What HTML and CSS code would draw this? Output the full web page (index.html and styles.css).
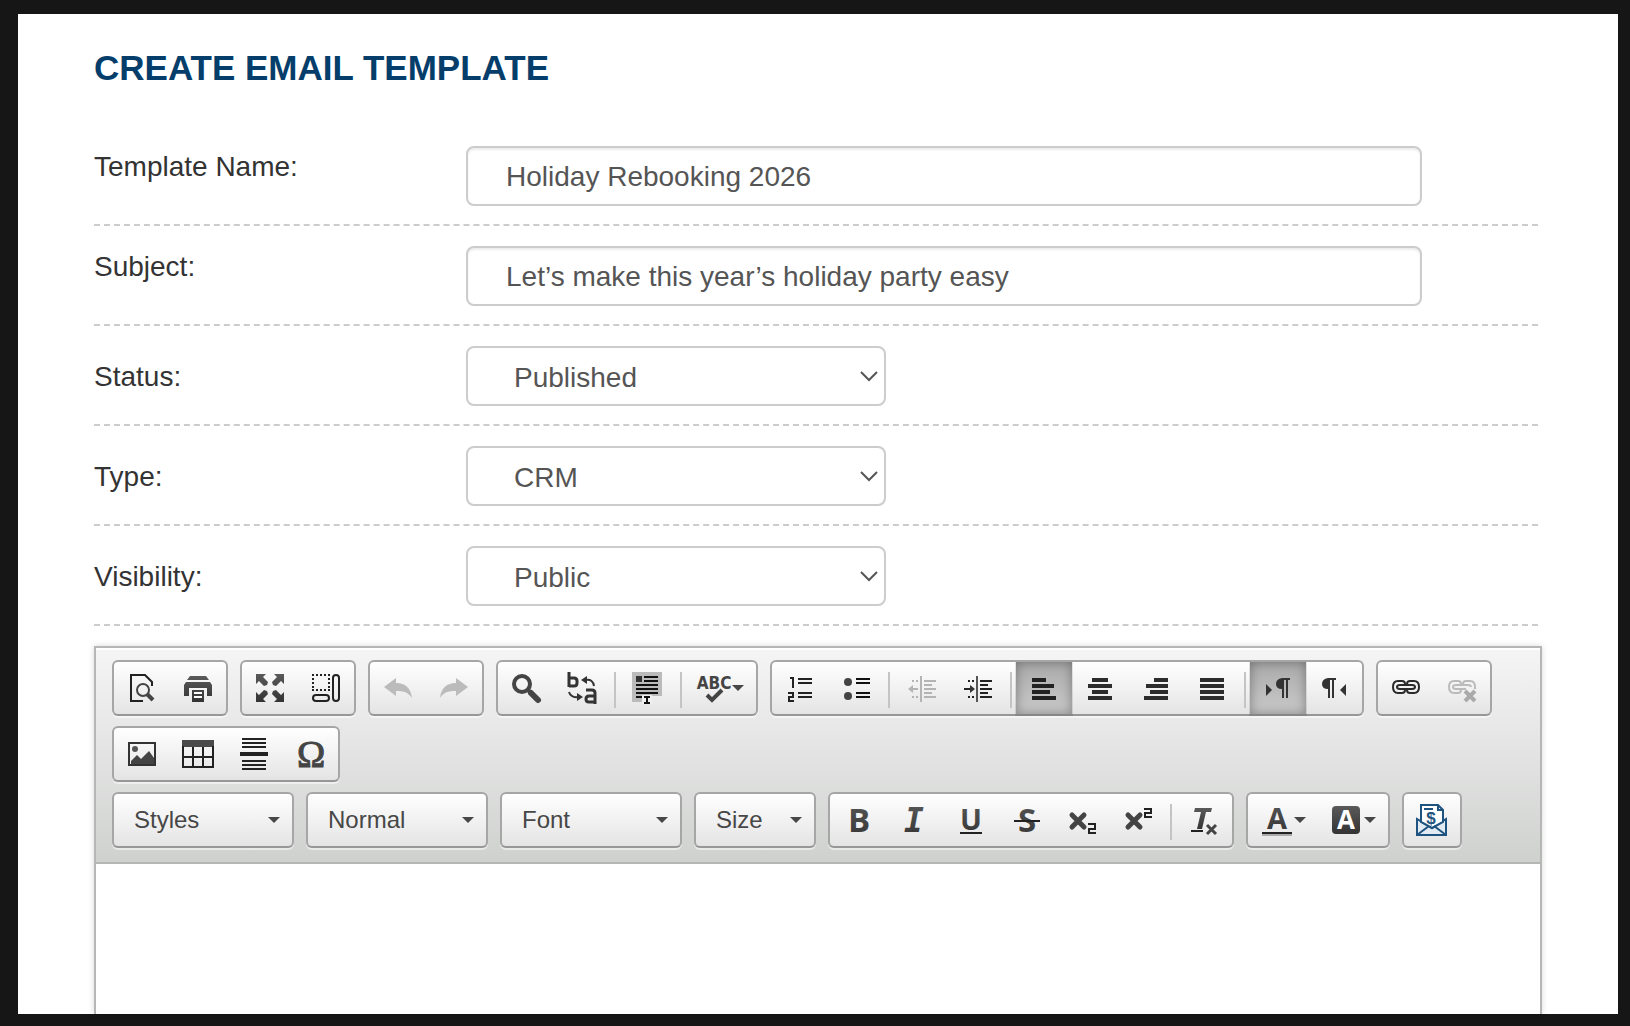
FILE: index.html
```html
<!DOCTYPE html>
<html lang="en">
<head>
<meta charset="utf-8">
<meta name="viewport" content="width=device-width, initial-scale=1">
<title>Create Email Template</title>
<link rel="stylesheet" href="styles.css">
</head>
<body>
<svg class="defs" aria-hidden="true">
  <defs>
    <linearGradient id="ink" x1="0" y1="0" x2="0" y2="1"><stop offset="0" stop-color="#5a5a5a"/><stop offset="1" stop-color="#333"/></linearGradient>
    <symbol id="arrow" viewBox="0 0 12 6"><path d="M0 0h12L6 6z" fill="#474747"/></symbol>
    <symbol id="chevron" viewBox="0 0 18 12"><path d="M1 2l8 8 8-8" fill="none" stroke="#555" stroke-width="2"/></symbol>
  </defs>
</svg>
<main class="panel">
  <h1 class="title">CREATE EMAIL TEMPLATE</h1>
  <form class="form">
    <div class="row">
      <label class="label" for="name">Template Name:</label>
      <input class="field" id="name" type="text" value="Holiday Rebooking 2026">
    </div>
    <div class="row">
      <label class="label" for="subject">Subject:</label>
      <input class="field" id="subject" type="text" value="Let’s make this year’s holiday party easy">
    </div>
    <div class="row row-select">
      <label class="label" for="status">Status:</label>
      <div class="picker"><select class="field" id="status"><option>Published</option></select><svg class="chevron"><use href="#chevron"/></svg></div>
    </div>
    <div class="row row-select">
      <label class="label" for="type">Type:</label>
      <div class="picker"><select class="field" id="type"><option>CRM</option></select><svg class="chevron"><use href="#chevron"/></svg></div>
    </div>
    <div class="row row-select">
      <label class="label" for="visibility">Visibility:</label>
      <div class="picker"><select class="field" id="visibility"><option>Public</option></select><svg class="chevron"><use href="#chevron"/></svg></div>
    </div>
  </form>

  <section class="editor" aria-label="Message editor">
    <div class="toolbar" role="toolbar" aria-label="Formatting">
      <div class="tools">
        <div class="group">
          <button class="tool" type="button" aria-label="Preview"><svg class="icon" viewBox="0 0 32 32"><path d="M17 29H5V3h14l7 7v4" fill="none" stroke="#222" stroke-width="2"/><circle cx="17" cy="18" r="6" fill="none" stroke="#444" stroke-width="2"/><path d="M21 22l6 6" stroke="#444" stroke-width="4"/></svg></button>
          <button class="tool" type="button" aria-label="Print"><svg class="icon" viewBox="0 0 32 32"><path d="M8 4h16l3 4H5zM4 10h24l2 3v11h-5v-8H7v8H2V13zM10 18h12v12H10z" fill="url(#ink)"/><path d="M8 17h16" stroke="#f6f6f6" stroke-width="2"/><path d="M12 21h8M12 25h8" stroke="#fff" stroke-width="2"/></svg></button>
        </div>
        <div class="group">
          <button class="tool" type="button" aria-label="Maximize"><svg class="icon" viewBox="0 0 32 32"><path d="M2 2h10L9 5l5 5-1 3-3 1-5-5-3 3zM30 2H20l3 3-5 5 1 3 3 1 5-5 3 3zM2 30h10l-3-3 5-5-1-3-3-1-5 5-3-3zM30 30H20l3-3-5-5 1-3 3-1 5 5 3-3z" fill="url(#ink)"/></svg></button>
          <button class="tool" type="button" aria-label="Show blocks"><svg class="icon" viewBox="0 0 32 32" fill="none" stroke="#222" stroke-width="2"><path d="M2 3h18M2 18h18M3 6v11M19 6v11" stroke-dasharray="2 2"/><rect x="3" y="23" width="16" height="6" rx="3"/><rect x="23" y="3" width="6" height="26" rx="3"/></svg></button>
        </div>
        <div class="group">
          <button class="tool" type="button" aria-label="Undo" disabled><svg class="icon" viewBox="0 0 32 32"><path d="M2 15l12-9v5c9 0 15 5 16 15-4-6-8-7-16-7v5z" fill="#bbb"/></svg></button>
          <button class="tool" type="button" aria-label="Redo" disabled><svg class="icon" viewBox="0 0 32 32"><path d="M30 15L18 6v5C9 11 3 16 2 26c4-6 8-7 16-7v5z" fill="#bbb"/></svg></button>
        </div>
        <div class="group">
          <button class="tool" type="button" aria-label="Find"><svg class="icon" viewBox="0 0 32 32" fill="none" stroke="#444"><circle cx="12" cy="12" r="8" stroke-width="4"/><path d="M18 18l3 3" stroke-width="4"/><path d="M21 21l7 7" stroke-width="6" stroke-linecap="round"/></svg></button>
          <button class="tool" type="button" aria-label="Replace"><svg class="icon" viewBox="0 0 32 32" fill="none" stroke="#333"><path d="M3 0v15M3 6h5q3 0 3 3v2q0 3-3 3H3" stroke-width="3"/><path d="M20 18h6q3 0 3 3v11M29 24h-6q-3 0-3 3t3 3h6" stroke-width="3"/><path d="M20 8q7-1 8 6M3 20q2 6 9 5" stroke-width="2"/><path d="M15 8l6-4v8zM17 25l-6-4v8z" fill="#333" stroke="none"/></svg></button>
          <span class="sep"></span>
          <button class="tool" type="button" aria-label="Select all"><svg class="icon" viewBox="0 0 32 32"><path d="M0 0h30v24H20v6H0z" fill="#bbb"/><path d="M4 4h6v6H4z" fill="#333"/><path d="M12 5h14M12 9h14M4 13h22M4 17h22M4 21h22M4 25h6" stroke="#111" stroke-width="2"/><path d="M10 23h10v9H10z" fill="#f0f0f0"/><path d="M12 25h6M12 31h6M15 25v6" stroke="#111" stroke-width="2"/></svg></button>
          <span class="sep"></span>
          <button class="tool tool-menu" type="button" aria-label="Spell check"><svg class="icon" viewBox="0 0 32 32"><text class="glyph-abc" x="16" y="17" text-anchor="middle">ABC</text><path d="M9 23l5 5L24 18" fill="none" stroke="#444" stroke-width="4"/></svg><svg class="arrow"><use href="#arrow"/></svg></button>
        </div>
        <div class="group">
          <button class="tool" type="button" aria-label="Numbered list"><svg class="icon" viewBox="0 0 32 32" fill="none" stroke="#222" stroke-width="2"><path d="M14 7h14M14 11h14M14 21h14M14 25h14"/><path d="M6 6h3v10M4 21h5v4H5v4h5"/></svg></button>
          <button class="tool" type="button" aria-label="Bulleted list"><svg class="icon" viewBox="0 0 32 32"><circle cx="8" cy="10" r="4" fill="#444"/><circle cx="8" cy="24" r="4" fill="#444"/><path d="M16 7h14M16 11h14M16 21h14M16 25h14" stroke="#111" stroke-width="2"/></svg></button>
          <span class="sep"></span>
          <button class="tool" type="button" aria-label="Decrease indent" disabled><svg class="icon" viewBox="0 0 32 32" stroke="#b4b4b4" stroke-width="2"><path d="M15 4v26M18 9h12M18 13h8M18 17h12M18 21h8M18 25h12M6 9h2M10 9h2M6 25h2M10 25h2M5 17h7"/><path d="M2 17l5-4v8z" fill="#b4b4b4" stroke="none"/></svg></button>
          <button class="tool" type="button" aria-label="Increase indent"><svg class="icon" viewBox="0 0 32 32" stroke="#222" stroke-width="2"><path d="M15 4v26" stroke="#555"/><path d="M18 9h12M18 13h8M18 17h12M18 21h8M18 25h12M6 9h2M10 9h2M6 25h2M10 25h2M2 17h7"/><path d="M13 17l-5-4v8z" fill="#333" stroke="none"/></svg></button>
          <span class="sep"></span>
          <button class="tool is-on" type="button" aria-label="Align left" aria-pressed="true"><svg class="icon" viewBox="0 0 32 32" stroke="#222" stroke-width="4"><path d="M4 8h14M4 14h22M4 20h18M4 26h24"/></svg></button>
          <button class="tool" type="button" aria-label="Center"><svg class="icon" viewBox="0 0 32 32" stroke="#2c2c2c" stroke-width="4"><path d="M8 8h16M4 14h24M8 20h16M4 26h24"/></svg></button>
          <button class="tool" type="button" aria-label="Align right"><svg class="icon" viewBox="0 0 32 32" stroke="#2c2c2c" stroke-width="4"><path d="M14 8h14M6 14h22M10 20h18M4 26h24"/></svg></button>
          <button class="tool" type="button" aria-label="Justify"><svg class="icon" viewBox="0 0 32 32" stroke="#2c2c2c" stroke-width="4"><path d="M4 8h24M4 14h24M4 20h24M4 26h24"/></svg></button>
          <span class="sep"></span>
          <button class="tool is-on" type="button" aria-label="Text direction left to right" aria-pressed="true"><svg class="icon" viewBox="0 0 32 32"><path d="M4 12l6 6-6 6z" fill="#333"/><path d="M28 6v2h-2v18h-2V8h-2v18h-2V17q-6 0-6-5t6-6z" fill="#333"/></svg></button>
          <button class="tool" type="button" aria-label="Text direction right to left"><svg class="icon" viewBox="0 0 32 32"><path d="M28 12l-6 6 6 6z" fill="#333"/><path d="M18 6v2h-2v18h-2V8h-2v18h-2V17q-6 0-6-5t6-6z" fill="#333"/></svg></button>
        </div>
        <div class="group">
          <button class="tool" type="button" aria-label="Link"><svg class="icon" viewBox="0 0 32 32" fill="none" stroke="#2a2a2a" stroke-width="2"><path d="M15 12q0-3-3-3H8q-5 0-5 6t5 6h4q3 0 3-3M17 12q0-3 3-3h4q5 0 5 6t-5 6h-4q-3 0-3-3"/><path d="M10 13q-3 0-3 2t3 2h12q3 0 3-2t-3-2z"/></svg></button>
          <button class="tool" type="button" aria-label="Unlink" disabled><svg class="icon" viewBox="0 0 32 32" fill="none" stroke="#bbb" stroke-width="2"><path d="M15 12q0-3-3-3H8q-5 0-5 6t5 6h4q3 0 3-3M17 12q0-3 3-3h4q5 0 5 6v2"/><path d="M20 17H10q-3 0-3-2t3-2h12q3 0 3 2"/><path d="M19 19l10 10M29 19L19 29" stroke="#aaa" stroke-width="4"/></svg></button>
        </div>
      </div>
      <div class="tools">
        <div class="group">
          <button class="tool" type="button" aria-label="Image"><svg class="icon" viewBox="0 0 32 32"><path d="M3 5h26v22H3z" fill="none" stroke="#333" stroke-width="2"/><circle cx="9" cy="11" r="3" fill="#555"/><path d="M5 26v-3l6-6 4 4 8-8 5 7v6z" fill="#444"/></svg></button>
          <button class="tool" type="button" aria-label="Table"><svg class="icon" viewBox="0 0 32 32"><path d="M0 2h32v7H0z" fill="#4a4a4a"/><path d="M1 8v21h30V8M1 19h30M11 9v20M21 9v20" fill="none" stroke="#222" stroke-width="2"/></svg></button>
          <button class="tool" type="button" aria-label="Horizontal line"><svg class="icon" viewBox="0 0 32 32" stroke="#222" stroke-width="2"><path d="M4 1h24M4 5h24M4 9h24M4 23h24M4 27h24M4 31h24"/><path d="M2 16h28" stroke-width="4"/></svg></button>
          <button class="tool" type="button" aria-label="Special character"><svg class="icon" viewBox="0 0 32 32"><text class="glyph-omega" x="17" y="29" text-anchor="middle">Ω</text></svg></button>
        </div>
      </div>
      <div class="tools">
        <div class="combo"><select class="combo-select" aria-label="Styles"><option>Styles</option></select><svg class="arrow"><use href="#arrow"/></svg></div>
        <div class="combo"><select class="combo-select" aria-label="Paragraph format"><option>Normal</option></select><svg class="arrow"><use href="#arrow"/></svg></div>
        <div class="combo"><select class="combo-select" aria-label="Font"><option>Font</option></select><svg class="arrow"><use href="#arrow"/></svg></div>
        <div class="combo combo-small"><select class="combo-select" aria-label="Size"><option>Size</option></select><svg class="arrow"><use href="#arrow"/></svg></div>
        <div class="group">
          <button class="tool" type="button" aria-label="Bold"><svg class="icon" viewBox="0 0 32 32"><text class="glyph" x="17" y="28" text-anchor="middle">B</text></svg></button>
          <button class="tool" type="button" aria-label="Italic"><svg class="icon" viewBox="0 0 32 32"><text class="glyph-italic" x="16" y="28" text-anchor="middle">I</text></svg></button>
          <button class="tool" type="button" aria-label="Underline"><svg class="icon" viewBox="0 0 32 32"><text class="glyph glyph-mid" x="17" y="26" text-anchor="middle">U</text><path d="M6 29h22" stroke="#222" stroke-width="2"/></svg></button>
          <button class="tool" type="button" aria-label="Strikethrough"><svg class="icon" viewBox="0 0 32 32"><text class="glyph" x="17" y="28" text-anchor="middle">S</text><path d="M4 17h26" stroke="#222" stroke-width="2"/></svg></button>
          <button class="tool" type="button" aria-label="Subscript"><svg class="icon" viewBox="0 0 32 32" fill="none"><path d="M6 11l12 12M18 11L6 23" stroke="#444" stroke-width="5" stroke-linecap="round"/><path d="M22 20h7v5h-6v4h7" stroke="#222" stroke-width="2"/></svg></button>
          <button class="tool" type="button" aria-label="Superscript"><svg class="icon" viewBox="0 0 32 32" fill="none"><path d="M6 11l12 12M18 11L6 23" stroke="#444" stroke-width="5" stroke-linecap="round"/><path d="M22 5h7v4h-6v4h7" stroke="#222" stroke-width="2"/></svg></button>
          <span class="sep"></span>
          <button class="tool" type="button" aria-label="Remove format"><svg class="icon" viewBox="0 0 32 32"><path d="M7 4h17l-1 4h-5l-4 17H9l4-17H6z" fill="url(#ink)"/><path d="M3 27h12" stroke="#222" stroke-width="2"/><path d="M19 21l9 9M28 21l-9 9" stroke="#444" stroke-width="3"/></svg></button>
        </div>
        <div class="group">
          <button class="tool tool-menu" type="button" aria-label="Text color"><svg class="icon" viewBox="0 0 32 32"><text class="glyph glyph-mid" x="17" y="25" text-anchor="middle">A</text><path d="M2 29h30" stroke="#222" stroke-width="2"/><path d="M2 31h30" stroke="#aaa" stroke-width="2"/></svg><svg class="arrow"><use href="#arrow"/></svg></button>
          <button class="tool tool-menu" type="button" aria-label="Background color"><svg class="icon" viewBox="0 0 32 32"><rect x="2" y="2" width="28" height="28" rx="4" fill="url(#ink)"/><text class="glyph glyph-light" x="16" y="25" text-anchor="middle">A</text></svg><svg class="arrow"><use href="#arrow"/></svg></button>
        </div>
        <div class="group">
          <button class="tool" type="button" aria-label="Insert payment email"><svg class="icon" viewBox="0 0 32 32" fill="none" stroke="#1f5380" stroke-width="2"><path d="M1 15v16h29V15L16 24z" fill="#e2eaf2"/><path d="M5 18V1h17l5 5v12l-11 6z" fill="#fff"/><path d="M22 1v5h5M1 31l12-9M30 31l-12-9M8 5h9"/><text class="glyph-dollar" x="15" y="20" text-anchor="middle">$</text></svg></button>
        </div>
      </div>
    </div>
    <textarea class="body" aria-label="Message body"></textarea>
  </section>
</main>
</body>
</html>
```

FILE: styles.css
```css
* { box-sizing: border-box; }

body {
  margin: 0;
  min-height: 100vh;
  padding: 14px 12px 12px 18px;
  display: flex;
  background: #161616;
  color: #333;
  font-family: "Liberation Sans", Arial, Helvetica, sans-serif;
  font-size: 28px;
}

.defs { position: absolute; width: 0; height: 0; }

.panel {
  flex: 1;
  min-width: 0;
  display: flex;
  flex-direction: column;
  padding: 34px 76px 0;
  background: #fff;
}

.title {
  margin: 0 0 38px;
  color: #053d6b;
  font-size: 35px;
  line-height: 40px;
}

.row {
  display: flex;
  align-items: flex-start;
  margin-right: 4px;
  padding: 20px 116px 18px 0;
  border-bottom: 2px dashed #ccc;
}
.row-select { align-items: center; }

.label {
  width: 372px;
  padding-top: 2px;
  line-height: 38px;
}

.field {
  flex: 1;
  min-width: 0;
  height: 60px;
  margin: 0;
  padding: 2px 38px 0;
  border: 2px solid #ccc;
  border-radius: 8px;
  background: #fff;
  box-shadow: inset 0 2px 2px rgba(0, 0, 0, 0.08);
  color: #555;
  font: inherit;
}

.picker, .combo { display: grid; align-items: center; }
.picker > *, .combo > * { grid-area: 1 / 1; }
.picker { width: 420px; }
.picker .field {
  width: 100%;
  padding: 2px 46px 0;
  box-shadow: none;
  appearance: none;
}
.chevron {
  width: 18px;
  height: 12px;
  margin-right: 8px;
  justify-self: end;
  pointer-events: none;
}

.editor {
  flex: 1;
  display: flex;
  flex-direction: column;
  margin-top: 20px;
  border: 2px solid #b6b6b6;
  border-bottom: 0;
  box-shadow: 0 0 6px rgba(0, 0, 0, 0.15);
}

.toolbar {
  display: flex;
  flex-direction: column;
  gap: 10px;
  padding: 12px 16px 14px;
  border-bottom: 2px solid #b6b6b6;
  background: linear-gradient(#f5f5f5, #cfd1cf);
  box-shadow: inset 0 2px 0 #fff;
}

.tools { display: flex; flex-wrap: wrap; gap: 10px 12px; }

.group, .combo {
  height: 56px;
  border: 2px solid #a6a6a6;
  border-bottom-color: #979797;
  border-radius: 6px;
  background: linear-gradient(#fff, #e4e4e4);
  box-shadow: 0 2px 0 rgba(255, 255, 255, 0.5);
}
.group { display: flex; }

.tool {
  display: flex;
  align-items: center;
  justify-content: center;
  gap: 2px;
  width: 56px;
  height: 52px;
  padding: 0;
  border: 0;
  background: none;
}
.tool-menu { width: 70px; }
.is-on {
  background: linear-gradient(#aaa, #cacaca);
  box-shadow: inset 0 0 12px rgba(0, 0, 0, 0.35), 0 1px 0 1px rgba(0, 0, 0, 0.1);
}

.icon { width: 32px; height: 32px; overflow: visible; }
.arrow { width: 12px; height: 6px; pointer-events: none; }

.sep {
  width: 2px;
  height: 36px;
  margin: 10px 4px;
  background: #c4c4c4;
}

.combo { width: 182px; }
.combo-small { width: 122px; }
.combo .arrow { justify-self: end; margin-right: 12px; }
.combo-select {
  width: 100%;
  height: 52px;
  padding: 0 20px 2px;
  border: 0;
  background: none;
  color: #474747;
  font: inherit;
  font-size: 24px;
  appearance: none;
}

.glyph { fill: url(#ink); font: bold 33px "Open Sans", sans-serif; }
.glyph-mid { font-size: 29px; }
.glyph-light { fill: #fff; font-size: 26px; }
.glyph-italic { fill: url(#ink); font: italic bold 33px "DejaVu Sans Mono", monospace; }
.glyph-omega { fill: #444; stroke: #444; stroke-width: 1px; font: 38px "Liberation Serif", serif; }
.glyph-abc { fill: #444; font: bold 17px "Liberation Sans Narrow", "DejaVu Sans Condensed", sans-serif; }
.glyph-dollar { fill: #1f5380; stroke: none; font: bold 17px "Liberation Sans", sans-serif; }

.body {
  flex: 1;
  width: 100%;
  min-height: 120px;
  padding: 20px;
  border: 0;
  outline: 0;
  resize: none;
  background: #fff;
  color: #333;
  font: inherit;
}
```
